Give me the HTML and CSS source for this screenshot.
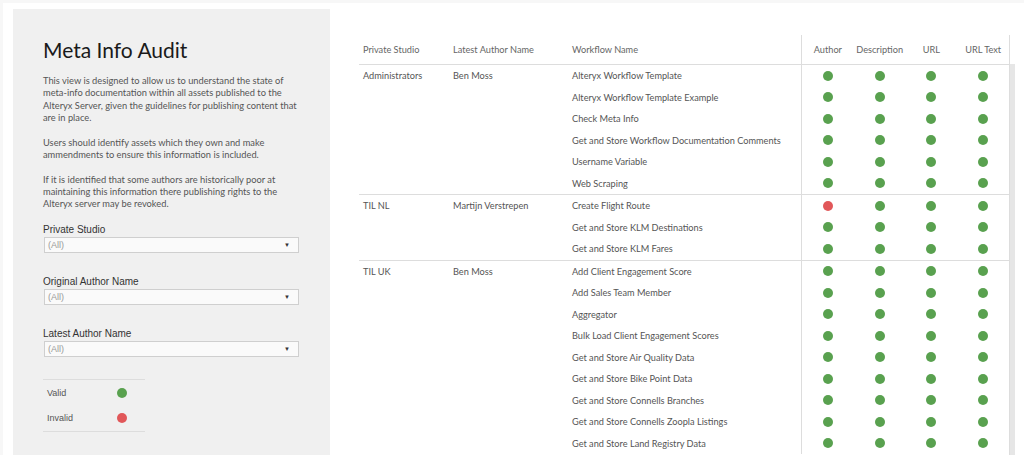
FILE: index.html
```html
<!DOCTYPE html>
<html lang="en">
<head>
  <meta charset="UTF-8">
  <meta name="viewport" content="width=device-width, initial-scale=1.0">
  <title>Meta Info Audit</title>
  <link rel="stylesheet" href="styles.css">
</head>
<body>
<div class="dashboard">

  <!-- Left panel: title, notes, filters, legend -->
  <div class="sidebar">
    <h1 class="title">Meta Info Audit</h1>
    <div class="intro">
      <p>This view is designed to allow us to understand the state of meta-info documentation within all assets published to the Alteryx Server, given the guidelines for publishing content that are in place.</p>
      <p>Users should identify assets which they own and make ammendments to ensure this information is included.</p>
      <p>If it is identified that some authors are historically poor at maintaining this information there publishing rights to the Alteryx server may be revoked.</p>
    </div>

    <div class="filter">
      <div class="filter-label">Private Studio</div>
      <div class="select"><span>(All)</span><span class="arrow">&#9660;</span></div>
    </div>
    <div class="filter">
      <div class="filter-label">Original Author Name</div>
      <div class="select"><span>(All)</span><span class="arrow">&#9660;</span></div>
    </div>
    <div class="filter">
      <div class="filter-label">Latest Author Name</div>
      <div class="select"><span>(All)</span><span class="arrow">&#9660;</span></div>
    </div>

    <div class="legend">
      <div class="legend-row"><span>Valid</span><span class="dot"></span></div>
      <div class="legend-row"><span>Invalid</span><span class="dot bad"></span></div>
    </div>
  </div>

  <!-- Audit table -->
  <div class="audit">
    <div class="table">
      <div class="table-head">
        <div class="cell studio">Private Studio</div>
        <div class="cell author">Latest Author Name</div>
        <div class="cell workflow">Workflow Name</div>
        <div class="checks">
          <span>Author</span><span>Description</span><span>URL</span><span>URL Text</span>
        </div>
      </div>

      <div class="group">
        <div class="cell studio">Administrators</div>
        <div class="cell author">Ben Moss</div>
        <div class="rows">
          <div class="row"><div class="cell workflow">Alteryx Workflow Template</div><div class="checks"><span class="dot"></span><span class="dot"></span><span class="dot"></span><span class="dot"></span></div></div>
          <div class="row"><div class="cell workflow">Alteryx Workflow Template Example</div><div class="checks"><span class="dot"></span><span class="dot"></span><span class="dot"></span><span class="dot"></span></div></div>
          <div class="row"><div class="cell workflow">Check Meta Info</div><div class="checks"><span class="dot"></span><span class="dot"></span><span class="dot"></span><span class="dot"></span></div></div>
          <div class="row"><div class="cell workflow">Get and Store Workflow Documentation Comments</div><div class="checks"><span class="dot"></span><span class="dot"></span><span class="dot"></span><span class="dot"></span></div></div>
          <div class="row"><div class="cell workflow">Username Variable</div><div class="checks"><span class="dot"></span><span class="dot"></span><span class="dot"></span><span class="dot"></span></div></div>
          <div class="row"><div class="cell workflow">Web Scraping</div><div class="checks"><span class="dot"></span><span class="dot"></span><span class="dot"></span><span class="dot"></span></div></div>
        </div>
      </div>

      <div class="group">
        <div class="cell studio">TIL NL</div>
        <div class="cell author">Martijn Verstrepen</div>
        <div class="rows">
          <div class="row"><div class="cell workflow">Create Flight Route</div><div class="checks"><span class="dot bad"></span><span class="dot"></span><span class="dot"></span><span class="dot"></span></div></div>
          <div class="row"><div class="cell workflow">Get and Store KLM Destinations</div><div class="checks"><span class="dot"></span><span class="dot"></span><span class="dot"></span><span class="dot"></span></div></div>
          <div class="row"><div class="cell workflow">Get and Store KLM Fares</div><div class="checks"><span class="dot"></span><span class="dot"></span><span class="dot"></span><span class="dot"></span></div></div>
        </div>
      </div>

      <div class="group">
        <div class="cell studio">TIL UK</div>
        <div class="cell author">Ben Moss</div>
        <div class="rows">
          <div class="row"><div class="cell workflow">Add Client Engagement Score</div><div class="checks"><span class="dot"></span><span class="dot"></span><span class="dot"></span><span class="dot"></span></div></div>
          <div class="row"><div class="cell workflow">Add Sales Team Member</div><div class="checks"><span class="dot"></span><span class="dot"></span><span class="dot"></span><span class="dot"></span></div></div>
          <div class="row"><div class="cell workflow">Aggregator</div><div class="checks"><span class="dot"></span><span class="dot"></span><span class="dot"></span><span class="dot"></span></div></div>
          <div class="row"><div class="cell workflow">Bulk Load Client Engagement Scores</div><div class="checks"><span class="dot"></span><span class="dot"></span><span class="dot"></span><span class="dot"></span></div></div>
          <div class="row"><div class="cell workflow">Get and Store Air Quality Data</div><div class="checks"><span class="dot"></span><span class="dot"></span><span class="dot"></span><span class="dot"></span></div></div>
          <div class="row"><div class="cell workflow">Get and Store Bike Point Data</div><div class="checks"><span class="dot"></span><span class="dot"></span><span class="dot"></span><span class="dot"></span></div></div>
          <div class="row"><div class="cell workflow">Get and Store Connells Branches</div><div class="checks"><span class="dot"></span><span class="dot"></span><span class="dot"></span><span class="dot"></span></div></div>
          <div class="row"><div class="cell workflow">Get and Store Connells Zoopla Listings</div><div class="checks"><span class="dot"></span><span class="dot"></span><span class="dot"></span><span class="dot"></span></div></div>
          <div class="row"><div class="cell workflow">Get and Store Land Registry Data</div><div class="checks"><span class="dot"></span><span class="dot"></span><span class="dot"></span><span class="dot"></span></div></div>
        </div>
      </div>
    </div>
    <div class="scrollbar"></div>
  </div>

</div>
</body>
</html>
```

FILE: styles.css
```css
/* Page frame */
* {
  margin: 0;
  padding: 0;
  box-sizing: border-box;
}
body {
  height: 455px;
  overflow: hidden;
  background-color: #f7f7f7;
  padding: 3px 0 0 3px;
  font-family: Lato, "Open Sans", sans-serif;
}

.dashboard {
  display: flex;
  align-items: flex-start;
  height: 100%;
  background-color: #ffffff;
}

/* Left panel */
.sidebar {
  width: 317px;
  height: 460px;
  margin: 6px 0 0 10px;
  padding: 28px 30px 0 30px;
  background-color: #f0f0f0;
}

.title {
  font-size: 21px;
  line-height: 26px;
  font-weight: normal;
  color: #1a1a1a;
}

.intro {
  margin-top: 12px;
  width: 256px;
  font-size: 9.3px;
  line-height: 12.3px;
  color: #555;
}
.intro p {
  margin-bottom: 12.5px;
}

/* Filters */
.filter {
  margin-bottom: 22px;
  font-family: "Liberation Sans", Arial, sans-serif;
}
.filter:first-of-type {
  margin-top: 2px;
}
.filter-label {
  font-size: 10px;
  line-height: 13px;
  color: #333;
}
.select {
  display: flex;
  justify-content: space-between;
  align-items: center;
  width: 255px;
  height: 16px;
  margin: 1px 0 0 1px;
  padding: 0 8px 0 3px;
  background-color: #fafafa;
  border: 1px solid #cfcfcf;
  font-size: 9px;
  color: #999;
}
.select .arrow {
  font-size: 6px;
  color: #333;
}

/* Legend */
.legend {
  width: 102px;
  margin-top: 6px;
  border-top: 1px solid #ddd;
  border-bottom: 1px solid #ddd;
  font-family: "Liberation Sans", Arial, sans-serif;
  font-size: 9px;
  color: #555;
}
.legend-row {
  display: flex;
  align-items: center;
  justify-content: space-between;
  height: 25.5px;
  padding: 0 18px 0 4px;
}

.dot {
  display: inline-block;
  width: 10px;
  height: 10px;
  border-radius: 50%;
  background-color: #59a14f;
}
.dot.bad {
  background-color: #e15759;
}

/* Audit table */
.audit {
  display: flex;
  margin: 32px 0 0 29px;
}

.table {
  width: 651px;
  border-right: 1px solid #ddd;
  font-size: 9.2px;
  color: #555;
}

.table-head {
  display: flex;
  height: 30px;
  border-bottom: 1px solid #ddd;
  color: #666;
}
.table-head .cell,
.table-head .checks span {
  display: flex;
  align-items: center;
}

.cell {
  padding-left: 4px;
  white-space: nowrap;
}
.studio {
  width: 90px;
}
.author {
  width: 119px;
}
.workflow {
  width: 233px;
}

.group {
  display: flex;
  border-top: 1px solid #ddd;
}
.group:nth-child(2) {
  border-top: none;
}
.group > .cell {
  height: 21.5px;
  line-height: 21px;
}

.row {
  display: flex;
  height: 21.5px;
  line-height: 21px;
}

.checks {
  display: grid;
  grid-template-columns: repeat(4, 1fr);
  width: 208px;
  border-left: 1px solid #ddd;
  justify-items: center;
  align-items: center;
}

.scrollbar {
  width: 5px;
  height: 400px;
  margin-top: 29px;
  background-color: #e6e6e6;
}
```
